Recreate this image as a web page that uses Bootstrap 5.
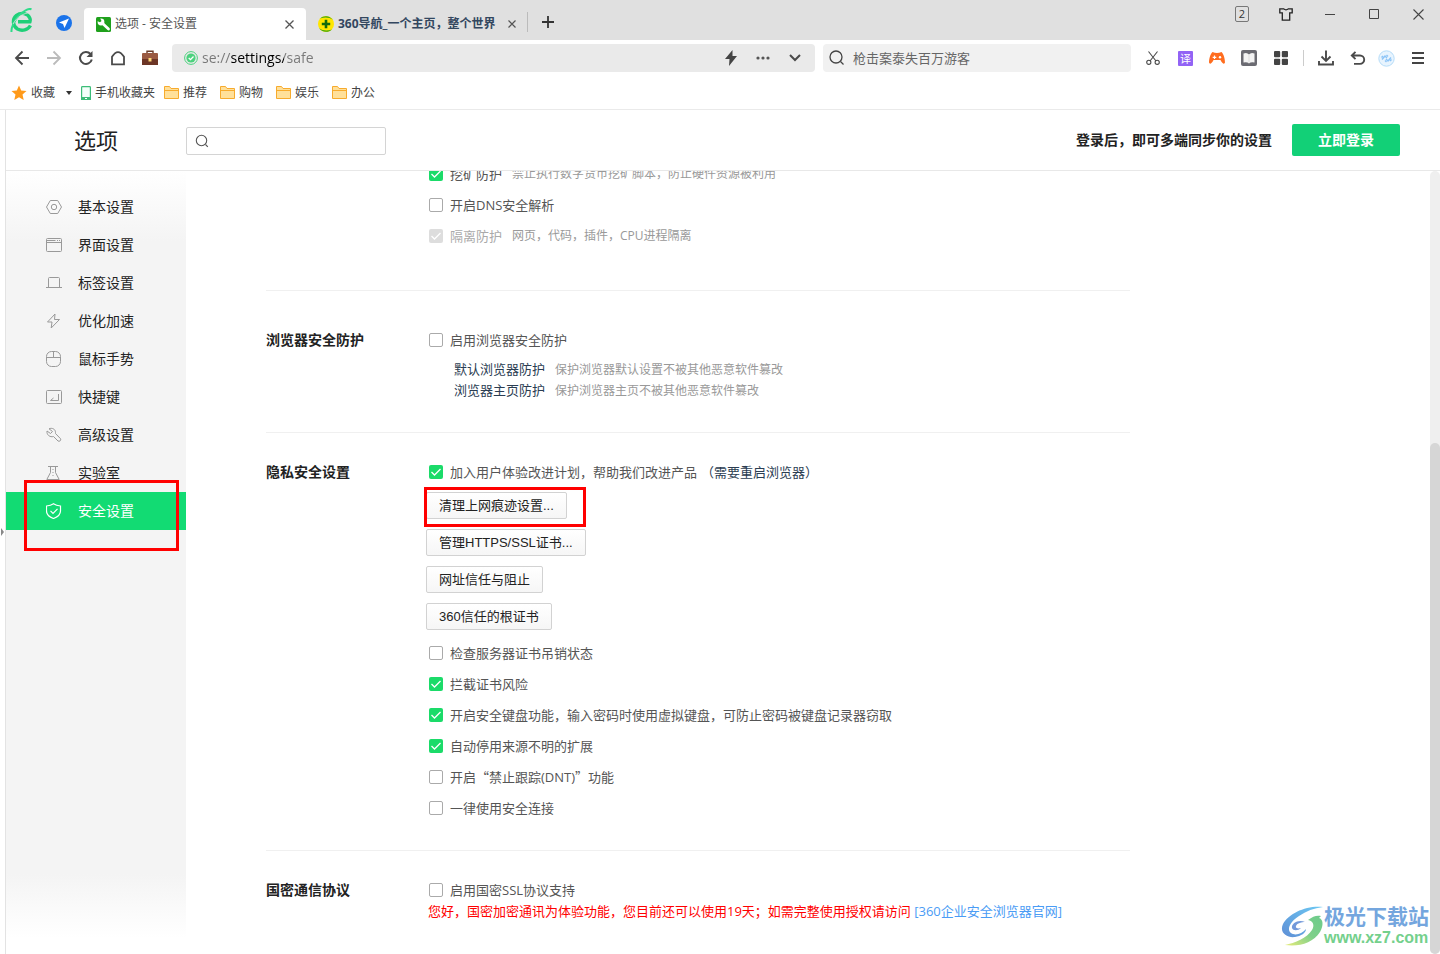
<!DOCTYPE html>
<html lang="zh-CN">
<head>
<meta charset="utf-8">
<meta name="viewport" content="width=device-width, initial-scale=1">
<title>选项 - 安全设置</title>
<link href="https://cdn.jsdelivr.net/npm/bootstrap@5.3.0/dist/css/bootstrap.min.css" rel="stylesheet">
<style>
  body { font-family: "Open Sans", "Noto Sans CJK SC", sans-serif; font-size: 13px; line-height: 20px; color: #222; background: #fff; }
  svg { display: block; flex: none; }
  button { padding: 0; border: 0; background: none; color: inherit; }
  a { text-decoration: none; }
  .ln { fill: none; }
  .ln:not([stroke]) { stroke: currentColor; }

  /* tab strip */
  .tabstrip { height: 40px; background: #e0e0e0; font-size: 12px; }
  .launch { width: 84px; padding: 8px 12px 0 10px; }
  .browser-tab { height: 32px; padding: 0 12px; color: #555; }
  .browser-tab.current { width: 222px; background: #fff; border-radius: 4px 4px 0 0; }
  .browser-tab.other { color: #33475f; font-weight: 700; padding-right: 7px; }
  .tab-sep { width: 1px; height: 20px; background: #bbb; }
  .win-btn { width: 44px; height: 28px; color: #444; }
  .tab-count { width: 14px; height: 16px; line-height: 14px; border: 1px solid #777; border-radius: 2px; font-size: 11px; color: #333; }

  /* address row */
  .addr-row { height: 36px; padding: 0 6px; }
  .tool { width: 32px; height: 28px; color: #4a4a4a; }
  .tool-narrow { width: 28px; }
  .field { height: 28px; border-radius: 4px; }
  .field input { border: 0; outline: 0; padding: 0; background: none; min-width: 0; }
  .addr { background: #eaeaea; margin-left: 6px; padding-left: 12px; }
  .addr .url { font-size: 14px; color: transparent; background: linear-gradient(90deg, #777 0 29px, #000 29px 82px, #777 82px); -webkit-background-clip: text; background-clip: text; }
  .web-search { width: 308px; background: #f1f1f1; margin: 0 6px 0 8px; padding-left: 6px; }
  .web-search input { font-size: 13px; }
  .web-search input::placeholder { color: #666; opacity: 1; }
  .tool-sep { width: 1px; height: 16px; margin: 0 6px; background: #ccc; }

  /* bookmarks */
  .bookmarks { height: 34px; padding: 0 11px; font-size: 12px; border-bottom: 1px solid #eaeaea; }
  .bookmarks a { color: #444; gap: 4px; }
  .bookmarks .caret { margin-left: 6px; }
  .bookmarks .folder { margin-left: 9px; }
  .bookmarks .folder + .folder { margin-left: 13px; }

  /* settings page */
  .gutter { width: 6px; border-right: 1px solid #e3e3e3; }
  .gutter svg { position: absolute; left: 0; top: 418px; }
  .page-head { height: 61px; border-bottom: 1px solid #e8e8e8; padding-right: 40px; font-size: 14px; }
  .page-title { width: 180px; margin: 0; font-size: 22px; line-height: 32px; font-weight: 400; }
  .find { width: 200px; height: 28px; margin-top: 2px; border: 1px solid #d4d4d4; border-radius: 2px; padding: 0 8px; }
  .find input { border: 0; outline: 0; min-width: 0; background: none; }
  .login { width: 108px; height: 32px; margin-left: 20px; background: #12d077; border-radius: 2px; color: #fff; font-weight: 700; }
  .side { width: 180px; padding-top: 17px; background: linear-gradient(#fff, #f4f4f4 70px calc(100% - 80px), #fff calc(100% - 16px)); }
  .side a { height: 38px; padding-left: 40px; gap: 16px; font-size: 14px; color: #222; }
  .side a svg { color: #999; }
  .side a.current { background: #12db73; color: #fff; }
  .side a.current svg { color: #fff; }
  .marker { position: absolute; border: 3px solid #f00; pointer-events: none; z-index: 2; }
  .marker-side { inset: -12px 7px -21px 18px; }
  .marker-btn { inset: -5px -19px -8px -2px; }

  .scroll-area { margin-left: 80px; margin-top: -12px; max-width: 864px; }
  .group { border-bottom: 1px solid #f0f0f0; }
  .group-title { width: 160px; flex: none; margin: 0; font-size: 14px; line-height: 30px; font-weight: 700; }
  .g1 { padding-bottom: 38px; }
  .g2 { padding: 34px 0 31px; }
  .g3 { padding: 24px 0 26px; }
  .g4 { padding-top: 24px; border: 0; }
  .opt { height: 31px; padding: 0 0 2px 3px; gap: 7px; color: #555; }
  .opt input { appearance: none; width: 14px; height: 14px; margin: 0; border: 1px solid #aaa; border-radius: 2px; background: #fff; }
  .opt input:checked { border: 0; background: #1bdb69 url("data:image/svg+xml,%3Csvg xmlns='http://www.w3.org/2000/svg' viewBox='0 0 14 14'%3E%3Cpath d='M2.5 7l3 3 6-6' fill='none' stroke='%23fff' stroke-width='1.3'/%3E%3C/svg%3E"); }
  .opt input:disabled { background-color: #ddd; }
  .opt.off { color: #aaa; }
  .opt .restart { margin-left: -3px; color: #2b3d52; }
  .cjk-quote { font-family: "Noto Sans CJK SC", sans-serif; }
  .hint { font-size: 12px; color: #999; margin-left: 3px; }
  .sub { padding-left: 28px; margin-top: 3px; line-height: 21px; color: #2b3d52; }
  .sub .hint { margin-left: 10px; }
  .btns { gap: 10px; padding: 4px 0 8px; }
  .push { height: 27px; padding: 0 12px; border: 1px solid #d2d2d2; border-radius: 2px; background: linear-gradient(#fff, #f6f6f6); font-family: "Liberation Sans", "Noto Sans CJK SC", sans-serif; color: #222; }
  .notice { margin: -6px 0 0 2px; line-height: 22px; color: #f00; }
  .notice a { color: #4a9cf5; }

  .track { width: 10px; background: #efefef; border-radius: 5px; }
  .thumb { height: 65.3%; background: #d6d6d6; border-radius: 5px; }
  .wm { position: absolute; right: 11px; bottom: 6px; font-weight: 700; }
  .wm-name { font-size: 21px; line-height: 24px; color: #74a6de; }
  .wm-url { font-family: "Liberation Sans", sans-serif; font-size: 16px; line-height: 20px; color: #74d08c; }
</style>
</head>
<body class="vh-100 d-flex flex-column overflow-hidden">

<header class="flex-shrink-0">
  <div class="tabstrip d-flex">
    <div class="launch d-flex justify-content-between">
      <svg width="24" height="25" viewBox="0 0 24 25" fill="none"><path d="M20.5 17.5C18 22 12 23.5 7.5 21 2.500 18 2 11 6.500 7.300 11 4 18 5 20 10.500 20.500 12 20.300 13 20 13.700H8" stroke="#1fcf78" stroke-width="3.400"/><path d="M1.500 24C1 20 4 12 10 6.500 14 3 19 0 21.500 1.300" stroke="#2fdc8a" stroke-width="2"/><path d="M3 16C7 9 13 5 21 4.500" stroke="#e0e0e0" stroke-width=".8"/></svg>
      <svg class="mt-1" width="16" height="22" viewBox="0 0 16 22"><circle cx="8" cy="11" r="8" fill="#1a73ea"/><path d="M13 6.500L3 10.500l4 1.500 1.500 4z" fill="#fff"/></svg>
    </div>
    <div class="browser-tab current d-flex align-items-center mt-2">
      <svg width="15" height="15" viewBox="0 0 15 15"><rect width="15" height="15" rx="1.500" fill="#1fa01c"/><path d="M5 5l7.500 7" stroke="#fff" stroke-width="2.800" stroke-linecap="round"/><circle cx="5" cy="5" r="3.400" fill="#fff"/><path d="M1 1h3l1.500 3-1.500 1.300L1 4z" fill="#1fa01c"/></svg>
      <span class="ms-1">选项 - 安全设置</span>
      <button class="ms-auto" aria-label="关闭标签"><svg class="ln" width="9" height="9" viewBox="0 0 9 9" stroke-width="1.300"><path d="M.5.5l8 8m0-8l-8 8"/></svg></button>
    </div>
    <div class="browser-tab other d-flex align-items-center mt-2">
      <svg width="16" height="16" viewBox="0 0 16 16"><circle cx="8" cy="8" r="8" fill="#ffe600"/><path d="M2 2.500C6-1 12-.5 15 4c-4-3-8-3-13-1.500zM14 13.500C10 17 4 16.500 1 12c4 3 8 3 13 1.500z" fill="#38a514"/><path d="M8 3.800v8.400M3.800 8h8.400" stroke="#126b0c" stroke-width="2.600"/></svg>
      <span class="ms-1">360导航_一个主页，整个世界</span>
      <button class="ms-2 px-1" aria-label="关闭标签"><svg class="ln" width="8" height="8" viewBox="0 0 8 8" stroke="#555" stroke-width="1.200"><path d="M.5.5l7 7m0-7l-7 7"/></svg></button>
    </div>
    <div class="d-flex align-items-center pt-1">
      <div class="tab-sep"></div>
      <button class="ms-2 px-1" aria-label="新标签"><svg class="ln" width="16" height="14" viewBox="0 0 16 14" stroke="#333" stroke-width="1.800"><path d="M8 1v12M2 7h12"/></svg></button>
    </div>
    <div class="d-flex ms-auto">
      <button class="win-btn d-flex align-items-center justify-content-center"><span class="tab-count d-block text-center">2</span></button>
      <button class="win-btn d-flex align-items-center justify-content-center" aria-label="皮肤"><svg class="ln" width="14" height="13" viewBox="0 0 14 13" stroke="#222" stroke-width="1.300"><path d="M4.500.8q2.500 2 5 0h3.700v4h-2.500v7.400H3.300V4.800H.8v-4z"/></svg></button>
      <button class="win-btn d-flex align-items-center justify-content-center" aria-label="最小化"><svg width="10" height="1" viewBox="0 0 10 1"><path fill="#444" d="M0 0h10v1H0z"/></svg></button>
      <button class="win-btn d-flex align-items-center justify-content-center" aria-label="最大化"><svg class="ln" width="10" height="10" viewBox="0 0 10 10"><path d="M.5.5h9v9h-9z"/></svg></button>
      <button class="win-btn d-flex align-items-center justify-content-center" aria-label="关闭"><svg class="ln" width="11" height="11" viewBox="0 0 11 11" stroke-width="1.100"><path d="M.5.5l10 10m0-10l-10 10"/></svg></button>
    </div>
  </div>

  <div class="addr-row d-flex align-items-center">
    <button class="tool d-flex align-items-center justify-content-center" aria-label="后退"><svg class="ln" width="16" height="16" viewBox="0 0 16 16" stroke-width="1.800"><path d="M15 8H2m6.500-6.500L2 8l6.500 6.500"/></svg></button>
    <button class="tool d-flex align-items-center justify-content-center" aria-label="前进"><svg class="ln" width="16" height="16" viewBox="0 0 16 16" stroke="#bbb" stroke-width="1.800"><path d="M1 8h13M7.500 1.500L14 8l-6.500 6.500"/></svg></button>
    <button class="tool d-flex align-items-center justify-content-center" aria-label="刷新"><svg class="ln" width="16" height="16" viewBox="0 0 16 16" stroke-width="2"><path d="M13.800 9.500A6 6 0 1 1 12.500 4"/><path d="M14.500 1v6h-6z" fill="currentColor" stroke="none"/></svg></button>
    <button class="tool d-flex align-items-center justify-content-center" aria-label="主页"><svg class="ln" width="16" height="16" viewBox="0 0 16 16" stroke-width="1.800"><path d="M2 6.500Q8-3 14 6.500V14H2z" transform="translate(0 .3)"/></svg></button>
    <button class="tool d-flex align-items-center justify-content-center" aria-label="工具箱"><svg width="16" height="16" viewBox="0 0 16 16"><path d="M5 3V1.200h6V3" fill="none" stroke="#6b3c2a" stroke-width="1.400"/><rect y="3" width="16" height="12" rx="1" fill="#9a5a42"/><path d="M0 9h16v6H0z" fill="#6c3526"/><path d="M6.500 8h3v3.500h-3z" fill="#ffd978"/></svg></button>
    <div class="field addr d-flex align-items-center flex-grow-1">
      <svg width="14" height="14" viewBox="0 0 14 14"><circle cx="7" cy="7" r="6.400" fill="none" stroke="#4cd27e" stroke-width="1"/><circle cx="7" cy="7" r="4.600" fill="#4cd27e"/><path d="M4.700 7l1.800 1.700L9.500 5.500" fill="none" stroke="#fff" stroke-width="1.300"/></svg>
      <input class="url flex-grow-1 ms-1" aria-label="地址" value="se://settings/safe">
      <button class="tool d-flex align-items-center justify-content-center" aria-label="极速模式"><svg width="12" height="16" viewBox="0 0 12 16"><path d="M7.500 0L0 9h4.500L4 16l8-10H7.500z" fill="#444"/></svg></button>
      <button class="tool d-flex align-items-center justify-content-center" aria-label="更多"><svg width="14" height="4" viewBox="0 0 14 4" fill="#555"><circle cx="2" cy="2" r="1.600"/><circle cx="7" cy="2" r="1.600"/><circle cx="12" cy="2" r="1.600"/></svg></button>
      <button class="tool d-flex align-items-center justify-content-center me-1" aria-label="展开"><svg class="ln" width="12" height="8" viewBox="0 0 12 8" stroke-width="2"><path d="M1 1l5 5 5-5"/></svg></button>
    </div>
    <div class="field web-search d-flex align-items-center">
      <svg class="ln" width="16" height="16" viewBox="0 0 16 16" stroke="#444" stroke-width="1.300"><circle cx="7" cy="7" r="6"/><path d="M11.500 11.500l3 3"/></svg>
      <input class="flex-grow-1 ms-2" aria-label="搜索" placeholder="枪击案泰失百万游客">
    </div>
    <button class="tool d-flex align-items-center justify-content-center" aria-label="截图"><svg class="ln" width="14" height="14" viewBox="0 0 14 14" stroke-width="1.100"><path d="M2.500.5l7.500 9.500M11.500.5L4 10"/><circle cx="2.800" cy="11.300" r="2.100"/><circle cx="11.200" cy="11.300" r="2.100"/></svg></button>
    <button class="tool d-flex align-items-center justify-content-center" aria-label="翻译"><svg width="15" height="15" viewBox="0 0 15 15"><rect width="15" height="15" rx="1" fill="#9263f5"/><text x="2" y="11.500" font-size="11" fill="#fff">译</text></svg></button>
    <button class="tool d-flex align-items-center justify-content-center" aria-label="游戏"><svg width="16" height="12" viewBox="0 0 16 12"><path d="M3.500 0Q8 2 12.500 0C15 2 16 8 16 10.500c-.5 2-2.500 1.500-4.500-2.500h-7C2.500 12 .5 12.500 0 10.500 0 8 1 2 3.500 0z" fill="#ff6d1f"/><path d="M5.500 3.500v3.600M3.700 5.300h3.600" stroke="#fff" stroke-width="1.200"/><circle cx="11" cy="5.300" r="1.200" fill="#fff"/></svg></button>
    <button class="tool d-flex align-items-center justify-content-center" aria-label="阅读"><svg width="16" height="16" viewBox="0 0 16 16"><rect width="16" height="16" rx="2" fill="#6b6b72"/><path d="M2.500 3.500Q6 2 8 4.500 10 2 13.500 3.500v9Q10 11.500 8 13.500 6 11.500 2.500 12.500z" fill="#f3f3f3"/><path d="M8 5v8" stroke="#ddd"/></svg></button>
    <button class="tool d-flex align-items-center justify-content-center" aria-label="扩展"><svg width="14" height="14" viewBox="0 0 14 14" fill="#444"><rect width="6.200" height="6.200" rx="1"/><rect x="7.800" width="6.200" height="6.200" rx="1"/><rect y="7.800" width="6.200" height="6.200" rx="1"/><rect x="7.800" y="7.800" width="6.200" height="6.200" rx="1"/></svg></button>
    <div class="tool-sep"></div>
    <button class="tool d-flex align-items-center justify-content-center" aria-label="下载"><svg class="ln" width="16" height="16" viewBox="0 0 16 16" stroke-width="1.900"><path d="M8 .5v10M3.500 6.500L8 11l4.500-4.500M1 11v3.500h14V11"/></svg></button>
    <button class="tool d-flex align-items-center justify-content-center" aria-label="恢复"><svg class="ln" width="16" height="14" viewBox="0 0 16 14" stroke-width="1.900"><path d="M5.500.8L1.800 4.500l3.700 3.700M2 4.500h8a4.200 4.200 0 0 1 0 8.400H4"/></svg></button>
    <button class="tool tool-narrow d-flex align-items-center" aria-label="账户"><svg class="ms-1" width="17" height="17" viewBox="0 0 17 17" fill="none" stroke="#8cc4f7"><circle cx="8.500" cy="8.500" r="7.700" fill="#e8f4fe" stroke="#b5dcf8"/><path d="M4 9.500l3-3.500 2 2M8 9l2 2 3-3.500M3.500 7.500L5 6M12 11l1.500-1.500M7 10.500L8.500 12M8.500 5L10 6.500" stroke-width="1.400"/></svg></button>
    <button class="tool d-flex align-items-center justify-content-center" aria-label="菜单"><svg width="12" height="12" viewBox="0 0 12 12" fill="#444"><path d="M0 0h12v2H0zM0 5h12v2H0zM0 10h12v2H0z"/></svg></button>
  </div>

  <nav class="bookmarks d-flex align-items-center">
    <a href="#" class="d-flex align-items-center"><svg width="16" height="16" viewBox="0 0 16 16"><path d="M8 .5l2.200 5 5.300.5-4 3.500 1.200 5.500L8 12.200 3.300 15l1.200-5.500L.5 6l5.300-.5z" fill="#ff9a1a"/></svg><span>收藏</span><svg class="caret" width="8" height="4" viewBox="0 0 8 4"><path d="M1 0h6L4 4z" fill="#333"/></svg></a>
    <a href="#" class="d-flex align-items-center ms-2"><svg width="10" height="14" viewBox="0 0 10 14"><rect x=".6" y=".6" width="8.800" height="12.800" rx=".8" fill="#f4fffa" stroke="#3dbd78" stroke-width="1.200"/><path d="M0 11h10v3H0z" fill="#3dbd78"/><path d="M4 12.500h2" stroke="#fff"/></svg><span>手机收藏夹</span></a>
    <a href="#" class="folder d-flex align-items-center"><svg width="15" height="13" viewBox="0 0 15 13"><path d="M.5 12.500V.5h5l1.500 2h7.500v10z" fill="#ffe09a" stroke="#f7ab2d"/><path d="M.5 4.500h14" stroke="#f7ab2d"/></svg><span>推荐</span></a>
    <a href="#" class="folder d-flex align-items-center"><svg width="15" height="13" viewBox="0 0 15 13"><path d="M.5 12.500V.5h5l1.500 2h7.500v10z" fill="#ffe09a" stroke="#f7ab2d"/><path d="M.5 4.500h14" stroke="#f7ab2d"/></svg><span>购物</span></a>
    <a href="#" class="folder d-flex align-items-center"><svg width="15" height="13" viewBox="0 0 15 13"><path d="M.5 12.500V.5h5l1.500 2h7.500v10z" fill="#ffe09a" stroke="#f7ab2d"/><path d="M.5 4.500h14" stroke="#f7ab2d"/></svg><span>娱乐</span></a>
    <a href="#" class="folder d-flex align-items-center"><svg width="15" height="13" viewBox="0 0 15 13"><path d="M.5 12.500V.5h5l1.500 2h7.500v10z" fill="#ffe09a" stroke="#f7ab2d"/><path d="M.5 4.500h14" stroke="#f7ab2d"/></svg><span>办公</span></a>
  </nav>
</header>

<div class="d-flex flex-grow-1 overflow-hidden position-relative">
  <div class="gutter flex-shrink-0 position-relative"><svg width="4" height="8" viewBox="0 0 4 8"><path d="M1 0l3 4-3 4z" fill="#888"/></svg></div>
  <div class="d-flex flex-column flex-grow-1">
    <div class="page-head d-flex align-items-center flex-shrink-0">
      <h1 class="page-title text-center">选项</h1>
      <label class="find d-flex align-items-center">
        <svg class="ln" width="14" height="14" viewBox="0 0 14 14" stroke="#555" stroke-width="1.100"><circle cx="6.500" cy="6.500" r="5.200"/><path d="M10.500 10.500l2.300 2.300"/></svg>
        <input class="flex-grow-1" type="text" aria-label="搜索设置">
      </label>
      <strong class="ms-auto">登录后，即可多端同步你的设置</strong>
      <button class="login">立即登录</button>
    </div>

    <div class="d-flex flex-grow-1 overflow-hidden">
      <nav class="side flex-shrink-0">
        <a href="#" class="d-flex align-items-center"><svg class="ln" width="16" height="16" viewBox="0 0 16 16"><path d="M4.300 1.500h7.400L15.500 8l-3.800 6.500H4.300L.5 8z"/><circle cx="8" cy="8" r="2.700"/></svg>基本设置</a>
        <a href="#" class="d-flex align-items-center"><svg class="ln" width="16" height="16" viewBox="0 0 16 16"><rect x=".5" y="1.500" width="15" height="13" rx="1"/><path d="M.5 5.500h15M.5 3.500h9M11 3.500h1m1 0h1"/></svg>界面设置</a>
        <a href="#" class="d-flex align-items-center"><svg class="ln" width="16" height="16" viewBox="0 0 16 16"><path d="M2.500 12V3.500q0-1 1-1h9q1 0 1 1V12M0 12.500h16"/></svg>标签设置</a>
        <a href="#" class="d-flex align-items-center"><svg class="ln" width="16" height="16" viewBox="0 0 16 16"><path d="M9 1L1.500 9H6l-.8 6L13.500 6.500H8.500z"/></svg>优化加速</a>
        <a href="#" class="d-flex align-items-center"><svg class="ln" width="16" height="16" viewBox="0 0 16 16"><rect x=".5" y=".5" width="14" height="15" rx="5"/><path d="M.5 6.500h14M7.500.5v6"/></svg>鼠标手势</a>
        <a href="#" class="d-flex align-items-center"><svg class="ln" width="16" height="16" viewBox="0 0 16 16"><rect x=".5" y="1.500" width="15" height="13" rx="1"/><path d="M12.500 5v6.500h-8L7.500 9"/></svg>快捷键</a>
        <a href="#" class="d-flex align-items-center"><svg class="ln" width="16" height="16" viewBox="0 0 16 16"><path d="M3 1.800C6 .5 9.500 2 9.500 5.500v1l5 5.200c1 1.500-1 3.300-2.500 2.300L7.500 9.500C4 10.500.5 8 1 4l3.500 2.500 2-2z"/></svg>高级设置</a>
        <a href="#" class="d-flex align-items-center"><svg class="ln" width="16" height="16" viewBox="0 0 16 16"><path d="M2 1.500h10M4.500 1.500v6L.8 14.500h12.400L9.500 7.500v-6"/><path d="M7 4v8" stroke-dasharray="1 2"/></svg>实验室</a>
        <div class="position-relative">
          <a href="#" class="current d-flex align-items-center" aria-current="page"><svg class="ln" width="16" height="16" viewBox="0 0 16 16" stroke-width="1.200"><path d="M7.500.7C9.500 2 12 2.700 14.500 3v5c0 3.500-3 6-7 7.500-4-1.500-7-4-7-7.500V3C3 2.700 5.500 2 7.500.7z"/><path d="M4.500 7.800l2.500 2.500 4.500-4.500"/></svg>安全设置</a>
          <div class="marker marker-side"></div>
        </div>
      </nav>

      <main class="flex-grow-1">
        <div class="scroll-area">
          <section class="group g1 d-flex">
            <div class="group-title"></div>
            <div>
              <label class="opt d-flex align-items-center"><input type="checkbox" checked><span>挖矿防护</span><span class="hint">禁止执行数字货币挖矿脚本，防止硬件资源被利用</span></label>
              <label class="opt d-flex align-items-center"><input type="checkbox"><span>开启DNS安全解析</span></label>
              <label class="opt off d-flex align-items-center"><input type="checkbox" checked disabled><span>隔离防护</span><span class="hint">网页，代码，插件，CPU进程隔离</span></label>
            </div>
          </section>
          <section class="group g2 d-flex">
            <h2 class="group-title">浏览器安全防护</h2>
            <div>
              <label class="opt d-flex align-items-center"><input type="checkbox"><span>启用浏览器安全防护</span></label>
              <div class="sub">
                <div>默认浏览器防护<span class="hint">保护浏览器默认设置不被其他恶意软件篡改</span></div>
                <div>浏览器主页防护<span class="hint">保护浏览器主页不被其他恶意软件篡改</span></div>
              </div>
            </div>
          </section>
          <section class="group g3 d-flex">
            <h2 class="group-title">隐私安全设置</h2>
            <div>
              <label class="opt d-flex align-items-center"><input type="checkbox" checked><span>加入用户体验改进计划，帮助我们改进产品</span><span class="restart">（需要重启浏览器）</span></label>
              <div class="btns d-flex flex-column align-items-start">
                <div class="position-relative d-flex"><button class="push">清理上网痕迹设置...</button><div class="marker marker-btn"></div></div>
                <button class="push">管理HTTPS/SSL证书...</button>
                <button class="push">网址信任与阻止</button>
                <button class="push">360信任的根证书</button>
              </div>
              <label class="opt d-flex align-items-center"><input type="checkbox"><span>检查服务器证书吊销状态</span></label>
              <label class="opt d-flex align-items-center"><input type="checkbox" checked><span>拦截证书风险</span></label>
              <label class="opt d-flex align-items-center"><input type="checkbox" checked><span>开启安全键盘功能，输入密码时使用虚拟键盘，可防止密码被键盘记录器窃取</span></label>
              <label class="opt d-flex align-items-center"><input type="checkbox" checked><span>自动停用来源不明的扩展</span></label>
              <label class="opt d-flex align-items-center"><input type="checkbox"><span>开启<span class="cjk-quote">“</span>禁止跟踪(DNT)<span class="cjk-quote">”</span>功能</span></label>
              <label class="opt d-flex align-items-center"><input type="checkbox"><span>一律使用安全连接</span></label>
            </div>
          </section>
          <section class="group g4 d-flex">
            <h2 class="group-title">国密通信协议</h2>
            <div>
              <label class="opt d-flex align-items-center"><input type="checkbox"><span>启用国密SSL协议支持</span></label>
              <p class="notice">您好，国密加密通讯为体验功能，您目前还可以使用19天；如需完整使用授权请访问 <a href="#">[360企业安全浏览器官网]</a></p>
            </div>
          </section>
        </div>
      </main>
      <div class="track d-flex flex-column justify-content-end flex-shrink-0"><div class="thumb"></div></div>
    </div>
  </div>

  <div class="wm d-flex align-items-center">
    <svg width="44" height="42" viewBox="0 0 42 42">
      <defs>
        <linearGradient id="wa" x1="0" y1="1" x2="1" y2="0"><stop offset="0" stop-color="#5f8fd6"/><stop offset="1" stop-color="#6cc9f3"/></linearGradient>
        <linearGradient id="wb" x1="0" y1="1" x2="1" y2="0"><stop offset="0" stop-color="#e8ec7a"/><stop offset=".5" stop-color="#7fd08a"/><stop offset="1" stop-color="#6ccb8c"/></linearGradient>
      </defs>
      <path d="M42 2C26 0 8 8 2 19c-4 9 4 14 12 13 6-1 11-4 11-8-4 5-11 7-15 4-5-4 0-12 8-17C25 6 33 3 42 2z" fill="url(#wa)"/>
      <path d="M24 17c-6-3-14 1-13 6 1 3 6 3 9 0-3 1-6 0-5-2 1-3 6-4 9-4z" fill="#7399da"/>
      <path d="M40 11c-4-1-8 0-13 4 5 1 7 5 4 10C26 33 14 38 4 40c14 2 28-2 35-13 4-7 3-13-1-14z" fill="url(#wb)"/>
    </svg>
    <div><div class="wm-name">极光下载站</div><div class="wm-url">www.xz7.com</div></div>
  </div>
</div>

<script src="https://cdn.jsdelivr.net/npm/bootstrap@5.3.0/dist/js/bootstrap.bundle.min.js"></script>
</body>
</html>
